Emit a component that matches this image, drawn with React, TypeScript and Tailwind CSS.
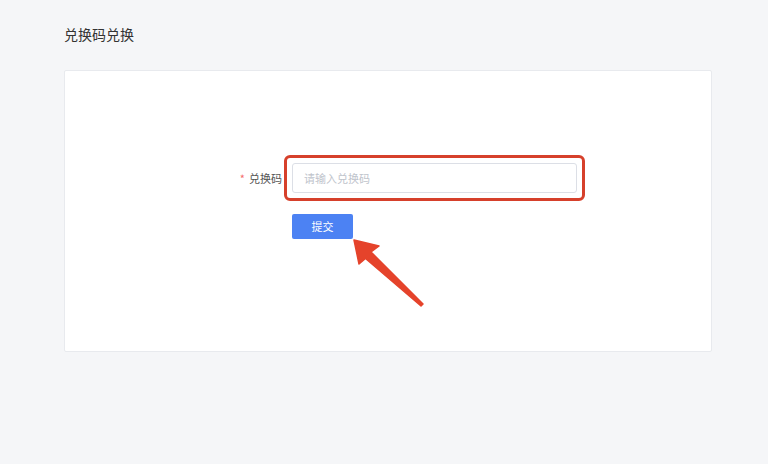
import React from "react";

const font = { fontFamily: '"Noto Sans CJK SC", "Noto Sans", sans-serif' };

export default function App() {
  return (
    <div
      className="relative w-[768px] h-[464px] bg-[#f5f6f8] overflow-hidden"
      style={font}
    >
      {/* 标题 */}
      <div className="pl-[64px] pt-[24px] h-[70px]">
        <h1 className="text-[14px] leading-[20px] text-[#333]">兑换码兑换</h1>
      </div>

      {/* 卡片 */}
      <div className="ml-[64px] w-[648px] h-[282px] bg-white border border-[#e8eaee] rounded-[2px]">
        <div className="pl-[167px] pt-[92px]">
          <div className="flex items-center">
            <label className="w-[50px] text-right text-[11px] text-[#555]">
              <span className="text-[#f56c6c] mr-[4px]">*</span>兑换码
            </label>
            <div className="relative ml-[10px]">
              <input
                className="w-[285px] h-[30px] border border-[#dcdfe6] rounded-[3px] px-[11px] text-[11px] outline-none placeholder:text-[#c0c4cc]"
                placeholder="请输入兑换码"
                style={font}
              />
              {/* 标注框 */}
              <div className="absolute -left-[8px] -top-[8px] w-[301px] h-[46px] border-[3px] border-[#d6402b] rounded-[6px] pointer-events-none" />
            </div>
          </div>
          <div className="pl-[60px] mt-[19px]">
            <button className="w-[61px] h-[25px] bg-[#4c82f3] rounded-[2px] text-white text-[11px]">
              提交
            </button>
          </div>
        </div>
      </div>

      {/* 标注箭头 */}
      <svg
        className="absolute left-[340px] top-[230px]"
        width="90"
        height="85"
        viewBox="0 0 90 85"
      >
        <polygon
          points="14,10 39,16 31,22 83,74 81,76 25.5,28.5 19,34"
          fill="#e5432b"
          stroke="#e5432b"
          strokeWidth="1.5"
          strokeLinejoin="round"
        />
      </svg>
    </div>
  );
}
